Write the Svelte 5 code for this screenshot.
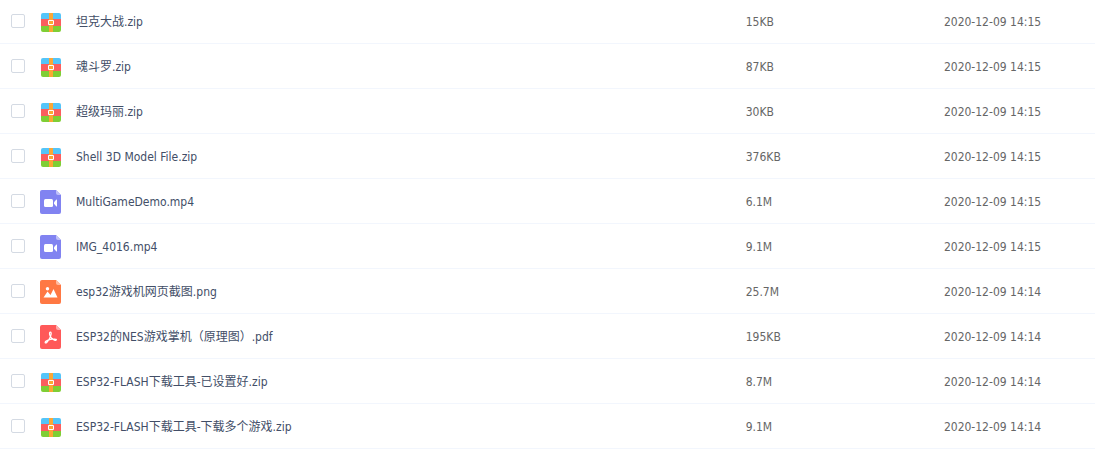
<script>
    let files = [
        { name: "坦克大战.zip", type: "zip", size: "15KB", date: "2020-12-09 14:15" },
        { name: "魂斗罗.zip", type: "zip", size: "87KB", date: "2020-12-09 14:15" },
        { name: "超级玛丽.zip", type: "zip", size: "30KB", date: "2020-12-09 14:15" },
        { name: "Shell 3D Model File.zip", type: "zip", size: "376KB", date: "2020-12-09 14:15" },
        { name: "MultiGameDemo.mp4", type: "video", size: "6.1M", date: "2020-12-09 14:15" },
        { name: "IMG_4016.mp4", type: "video", size: "9.1M", date: "2020-12-09 14:15" },
        { name: "esp32游戏机网页截图.png", type: "image", size: "25.7M", date: "2020-12-09 14:14" },
        { name: "ESP32的NES游戏掌机（原理图）.pdf", type: "pdf", size: "195KB", date: "2020-12-09 14:14" },
        { name: "ESP32-FLASH下载工具-已设置好.zip", type: "zip", size: "8.7M", date: "2020-12-09 14:14" },
        { name: "ESP32-FLASH下载工具-下载多个游戏.zip", type: "zip", size: "9.1M", date: "2020-12-09 14:14" }
    ].map((file) => ({ ...file, checked: false }));

    const colors = { video: "#8183f1", image: "#ff7843", pdf: "#ff5959" };
    const folds = { video: "#c0c1f8", image: "#ffbca1", pdf: "#ffacac" };
</script>

<table class="file-list">
    <colgroup>
        <col class="col-check" />
        <col class="col-icon" />
        <col />
        <col class="col-size" />
        <col class="col-date" />
    </colgroup>
    <tbody>
        {#each files as file, i}
            <tr>
                <td class="check">
                    <input type="checkbox" id="file-{i}" bind:checked={file.checked} />
                </td>
                <td>
                    <svg width="24" height="24" viewBox="0 0 24 24" aria-hidden="true">
                        {#if file.type === "zip"}
                            <path d="M4 3h16q2 0 2 2v4H2V5q0-2 2-2z" fill="#54c5f8" />
                            <path d="M2 9h20v7H2z" fill="#fb5e5e" />
                            <path d="M2 16h20v4q0 2-2 2H4q-2 0-2-2z" fill="#7fce35" />
                            <path d="M10 3h4v19h-4z" fill="#fba735" />
                            <path d="M9.5 10.5h5v4h-5z" fill="#fba735" stroke="#fff" />
                        {:else}
                            <path d="M3 0h14l5 5v17q0 2-2 2H3q-2 0-2-2V2q0-2 2-2z" fill={colors[file.type]} />
                            <path d="M17 0l5 5h-3q-2 0-2-2z" fill={folds[file.type]} />
                            {#if file.type === "video"}
                                <rect x="5" y="9" width="9" height="8" rx="1.5" fill="#fff" />
                                <path d="M15 12.2l2.4-2.6q.6-.4.6.4v6q0 .8-.6.4L15 13.8z" fill="#fff" />
                            {:else if file.type === "image"}
                                <circle cx="8.5" cy="8.8" r="1.7" fill="#fff" />
                                <path d="M4.5 17.5l4-6 3 3.5 3-6 4 8.5z" fill="#fff" />
                            {:else}
                                <path
                                    d="M11.4 7.2c1.6 0 .6 3.6-.9 6.3-1.5 2.8-3.4 5-4.2 4.4-.9-1 1.6-2.8 5.2-3.5 3.6-.7 6.1-.4 5.9.5-.3 1-3.2.1-5-1.9-1.9-2.1-2.6-5.8-1-5.8z"
                                    fill="none"
                                    stroke="#fff"
                                    stroke-width="1.2"
                                />
                            {/if}
                        {/if}
                    </svg>
                </td>
                <td class="name"><label for="file-{i}">{file.name}</label></td>
                <td>{file.size}</td>
                <td>{file.date}</td>
            </tr>
        {/each}
    </tbody>
</table>

<style>
    :global(body) {
        margin: 0;
        background: #fff;
    }

    .file-list {
        width: 100%;
        margin-top: -1px;
        border-collapse: separate;
        border-spacing: 0;
        table-layout: fixed;
        font-family: "DejaVu Sans Condensed", "Noto Sans CJK SC", sans-serif;
        font-size: 12px;
        line-height: 18px;
        color: #666;
    }

    .col-check {
        width: 39px;
    }

    .col-icon {
        width: 37px;
    }

    .col-size {
        width: 18.1%;
    }

    .col-date {
        width: 13.8%;
    }

    td {
        box-sizing: border-box;
        height: 45px;
        padding: 2px 0 0;
        border-bottom: 1px solid #f2f6fd;
        vertical-align: middle;
        white-space: nowrap;
    }

    .check {
        padding: 0 0 0 11px;
    }

    input {
        display: block;
        appearance: none;
        box-sizing: border-box;
        width: 14px;
        height: 14px;
        margin: 0;
        border: 1px solid #d4dae3;
        border-radius: 2px;
        background: #fff;
        cursor: pointer;
    }

    input:checked {
        border-color: #06a7ff;
        background: #06a7ff;
    }

    svg {
        display: block;
    }

    .name {
        overflow: hidden;
        color: #424e67;
        text-overflow: ellipsis;
    }

    label {
        cursor: pointer;
    }
</style>
